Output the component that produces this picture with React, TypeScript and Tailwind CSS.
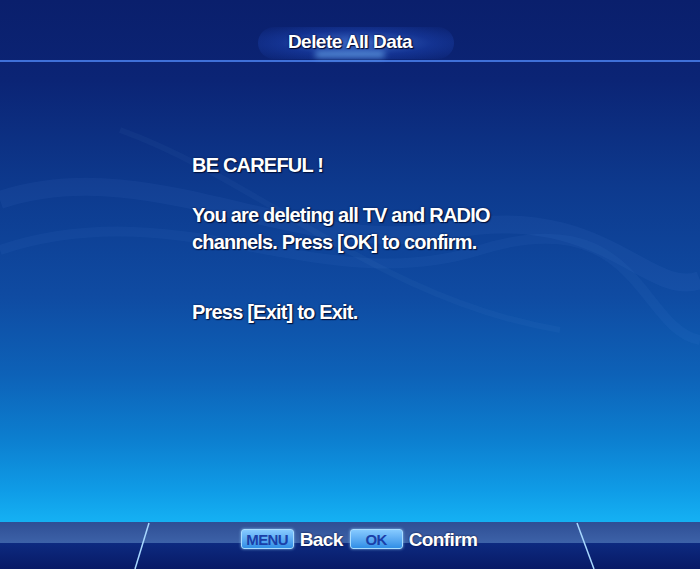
import React from 'react'

const font = { fontFamily: '"Liberation Sans", Arial, sans-serif' }

function Key({ label }: { label: string }) {
  return (
    <span className="flex h-[20px] w-[53px] items-center justify-center rounded-[3px] border border-[#a8dcff] bg-gradient-to-b from-[#86caff] to-[#2f8ee6] text-[15px] font-bold leading-none tracking-[-0.6px] text-[#1a3fa8] shadow-[0_0_3px_rgba(150,210,255,0.8)] [text-shadow:none]">
      {label}
    </span>
  )
}

export default function App() {
  return (
    <div
      style={font}
      className="relative flex h-[569px] w-[700px] flex-col overflow-hidden bg-[linear-gradient(180deg,#0a1f6c_0%,#0b2475_14%,#0d3a8e_33%,#0f4ba2_52%,#0d62b8_66%,#0c7ecf_77%,#0f9be6_86%,#15b2f4_92%)] text-white"
    >
      {/* swoosh deko */}
      <svg className="pointer-events-none absolute inset-0" width="700" height="569" viewBox="0 0 700 569">
        <path d="M0 200 C 150 150, 300 260, 450 230 S 650 300, 700 280" stroke="#7fb0ff" strokeOpacity="0.06" strokeWidth="18" fill="none" />
        <path d="M0 250 C 180 190, 320 300, 480 250 S 640 330, 700 340" stroke="#7fb0ff" strokeOpacity="0.05" strokeWidth="10" fill="none" />
        <path d="M120 130 C 260 180, 380 300, 560 330" stroke="#9fc8ff" strokeOpacity="0.04" strokeWidth="6" fill="none" />
      </svg>

      {/* titel */}
      <div className="relative flex h-[62px] items-end justify-center border-b-2 border-[#3f70d8] pb-[7px]">
        <div className="absolute left-[258px] top-[27px] h-[32px] w-[196px] rounded-full bg-[radial-gradient(ellipse_at_center,rgba(90,150,255,0.6)_0%,rgba(40,90,220,0.3)_55%,rgba(10,30,110,0)_100%)]" />
        <div className="absolute left-[315px] top-[52px] h-[5px] w-[70px] rounded-full bg-[#7cc0ff] opacity-80 blur-[3px]" />
        <span className="relative text-[19px] font-bold leading-[22px] tracking-[-0.55px] [text-shadow:0_0_2px_#000830,1px_1px_1px_#000830]">
          Delete All Data
        </span>
      </div>

      {/* inhalt */}
      <div className="relative flex flex-1 flex-col pl-[192px] pt-[90px] text-[20px] font-bold leading-[27px] tracking-[-0.8px] [text-shadow:0_0_2px_#00103a,1px_1px_1px_#00103a]">
        <p>BE CAREFUL !</p>
        <p className="mt-[23px]">You are deleting all TV and RADIO</p>
        <p>channels. Press [OK] to confirm.</p>
        <p className="mt-[43px]">Press [Exit] to Exit.</p>
      </div>

      {/* fusszeile */}
      <div className="relative flex h-[47px] flex-col">
        <div className="h-[21px] bg-gradient-to-b from-[#2f4f95] to-[#3d62a8]" />
        <div className="flex-1 bg-gradient-to-b from-[#0d2a80] to-[#081a66]" />
        <svg className="absolute inset-0" width="700" height="47" viewBox="0 0 700 47">
          <path d="M149 1 L135 47" stroke="#a8d8ff" strokeWidth="1.5" fill="none" />
          <path d="M577 1 L594 47" stroke="#a8d8ff" strokeWidth="1.5" fill="none" />
        </svg>
        <div className="absolute inset-x-0 top-[7px] flex h-[20px] items-center justify-center gap-[6px] pl-[18px] text-[19px] font-bold leading-none tracking-[-0.6px] [text-shadow:0_0_2px_#000830]">
          <Key label="MENU" />
          <span className="mr-[1px]">Back</span>
          <Key label="OK" />
          <span>Confirm</span>
        </div>
      </div>
    </div>
  )
}
